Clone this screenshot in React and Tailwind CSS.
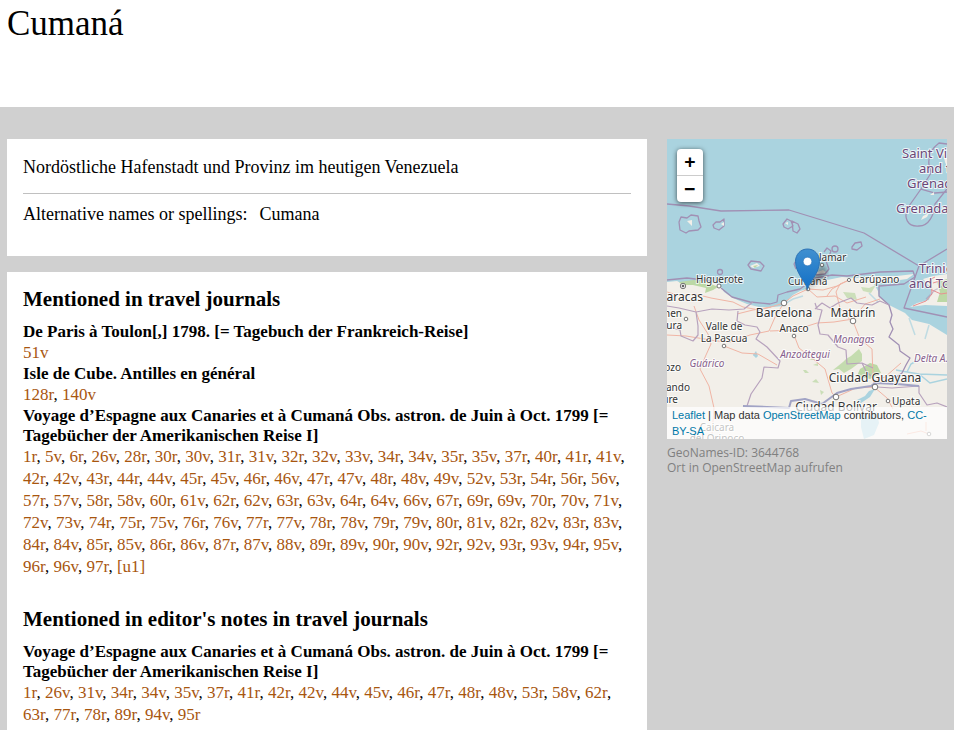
const journals = [
  { title: 'De Paris à Toulon[,] 1798. [= Tagebuch der Frankreich-Reise]', pages: ['51v'] },
  { title: 'Isle de Cube. Antilles en général', pages: ['128r', '140v'] },
  {
    title: 'Voyage d’Espagne aux Canaries et à Cumaná Obs. astron. de Juin à Oct. 1799 [= Tagebücher der Amerikanischen Reise I]',
    pages:
      '1r 5v 6r 26v 28r 30r 30v 31r 31v 32r 32v 33v 34r 34v 35r 35v 37r 40r 41r 41v 42r 42v 43r 44r 44v 45r 45v 46r 46v 47r 47v 48r 48v 49v 52v 53r 54r 56r 56v 57r 57v 58r 58v 60r 61v 62r 62v 63r 63v 64r 64v 66v 67r 69r 69v 70r 70v 71v 72v 73v 74r 75r 75v 76r 76v 77r 77v 78r 78v 79r 79v 80r 81v 82r 82v 83r 83v 84r 84v 85r 85v 86r 86v 87r 87v 88v 89r 89v 90r 90v 92r 92v 93r 93v 94r 95v 96r 96v 97r [u1]'.split(' '),
  },
];

const notes = [
  {
    title: 'Voyage d’Espagne aux Canaries et à Cumaná Obs. astron. de Juin à Oct. 1799 [= Tagebücher der Amerikanischen Reise I]',
    pages: '1r 26v 31v 34r 34v 35v 37r 41r 42r 42v 44v 45v 46r 47r 48r 48v 53r 58v 62r 63r 77r 78r 89r 94v 95r'.split(' '),
  },
];

function Section({ title, entries }) {
  return (
    <section className="pb-[29px]">
      <h2 className="text-[21px] leading-6 font-bold">{title}</h2>
      <div className="pt-[11px]">
        {entries.map((entry) => (
          <div key={entry.title}>
            <h3 className="text-[17px] leading-5 font-bold">{entry.title}</h3>
            <p className="text-[17px] leading-[22px]">
              {entry.pages.map((page, i) => (
                <span key={page}>
                  {i > 0 && ', '}
                  <a href="#" className="text-[#a8560f]">{page}</a>
                </span>
              ))}
            </p>
          </div>
        ))}
      </div>
    </section>
  );
}

function Place({ x, y, size = 11, anchor = 'start', children }) {
  return (
    <text x={x} y={y} fontSize={size} textAnchor={anchor} fill="#333" stroke="#fff" strokeOpacity="0.75" strokeWidth="2" paintOrder="stroke">
      {children}
    </text>
  );
}

function Region({ x, y, size = 11, anchor = 'start', italic = false, children }) {
  return (
    <text x={x} y={y} fontSize={size} textAnchor={anchor} fontStyle={italic ? 'italic' : 'normal'} fill={italic ? '#87618c' : '#6b4877'} stroke="#fff" strokeOpacity="0.8" strokeWidth="2" paintOrder="stroke">
      {children}
    </text>
  );
}

const towns = [[52, 147, 2], [182, 141, 1.6], [155, 126, 1.8], [141, 150, 1.8], [19, 180, 1.8], [57, 207, 1.8], [127, 197, 1.8], [117, 164, 2.8], [186, 182, 2.8], [208, 248, 2.8], [169, 258, 2.8], [221, 262, 1.8], [262, 295, 1.8]];

function MapDrawing() {
  return (
    <svg viewBox="0 0 280 300" preserveAspectRatio="xMidYMid slice" className="block h-full w-full font-['Noto_Sans',sans-serif]" role="img" aria-label="Map of Cumaná">
      <defs>
        <linearGradient id="pin" x1="0" y1="0" x2="0" y2="1">
          <stop offset="0" stopColor="#4090d0" />
          <stop offset="1" stopColor="#126fc6" />
        </linearGradient>
        <filter id="soft"><feGaussianBlur stdDeviation="2" /></filter>
      </defs>
      <rect width="280" height="300" fill="#aad3df" />
      <g fill="#f2efe9">
        <path d="M0 143L10 142L16 145L30 142L42 143L53 146L57 153L66 159L80 165L92 168L106 168L116 167L122 160L126 156L133 152L140 150L145 145L149 140L160 141L175 138L190 139L213 137L230 137L247 135L240 140L225 142L207 145L211 152L212 158L222 166L230 170L238 174L245 181L262 185L280 196V300H0Z" />
        <path d="M256 140L266 137L280 135V167L258 166L243 168L250 164L262 161L265 150Z" />
        <path d="M148 134L156 131L160 134L152 136Z" />
        <path d="M83 127L90 124L93 127L86 129Z" />
      </g>
      <g fill="#bcd8a5">
        <path d="M12 143L27 141L42 144L51 148L46 151L38 154L39 149L26 146L15 146Z" />
        <path d="M192 210L184 217L179 220L176 223L166 231L172 230L177 234L184 230L195 222L195 215Z" opacity=".85" />
        <path d="M193 230L203 224L210 226L214 234L203 240L190 237Z" />
        <path d="M176 153L188 154L190 161L180 159ZM194 148L202 149L209 146L204 154L196 152Z" opacity=".7" />
        <path d="M270 143L280 140V163L270 163L273 153Z" />
        <path d="M86 127L91 126L88 129Z" />
        <path d="M136 231h3l3 3h-4zm10-5l5-2v3zm-1 17l4-3 3 4zm8 8l4 2-3 3zm-11-30l5-2 2 2z" opacity=".75" />
      </g>
      <g fill="none" stroke="#aad3df" strokeWidth="1.500">
        <path d="M229 231L240 233L252 235L280 236M240 233L244 225L251 221M252 235L263 244L280 240" />
        <path d="M114 167L126 160L136 157M202 154L211 163M86 216L90 215M242 179L248 196M262 186L258 200" opacity=".7" />
      </g>
      <g fill="#aad3df">
        <path d="M208 250L202 252L198 257L190 261L194 264L203 258Z" />
        <path d="M86 216l3-4 2 5-2 2zM194 272L201 278L210 273L212 284L207 296L197 300L194 288Z" />
      </g>
      <g fill="none" stroke="#f0b5a5" strokeWidth="1">
        <path d="M0 153L14 157L28 155L44 159L66 163L76 168L92 171L104 168L117 164L126 157L141 150L156 151L170 147L182 141" />
        <path d="M117 164l-8 12-7 16-19 4-20 7-13-1-31-5-19-1" />
        <path d="M27 167l5 14 9 14 3 10-5 11-6 14 9 17 5 22-2 26" />
        <path d="M103 192l25-1 22-7 17-1 19-3 12-15 15-5" />
        <path d="M127 196l5 13 14 11 12 10 7 24 4 4 20-9 18-1 13 11 6 11" />
        <path d="M186 182l7 18 12 10 1 28 2 10" />
        <path d="M57 207l18 7 16 1 19 11M206 243l12-5 16-14" />
        <path d="M182 141L173 145L169 153L173 169L184 182M141 150L150 158L168 157L180 164L199 158M174 145L165 150L160 157" />
        <path d="M70 175L86 171L104 168M240 295L254 292L262 295M259 292L259 283" />
      </g>
      <g fill="none" stroke="#e98f91" strokeWidth="1">
        <path d="M246 167L259 162L265 155L264 140L268 138M265 151L274 155L280 154M266 144L276 141" />
      </g>
      <g fill="none" stroke="#a190b4" strokeWidth="1.300" strokeLinejoin="round">
        <path d="M0 65L22 67L54 72L122 71L197 94L252 127L237 169L280 178M252 127L280 110" />
        <path d="M12 83L14 78L20 79L24 76L31 77L32 82L34 88L31 91L22 92L19 94L13 91Z" />
        <path d="M46 86L49 83L53 83L57 80L57 87L52 91L47 89ZM116 85L120 80L124 82L126 87L121 90L117 88ZM125 82L131 85L133 90L130 94L126 92Z" />
        <path d="M81 126L84 122L93 123L97 127L94 132L84 130ZM185 108L188 104L194 103L195 107L190 111L185 110Z" />
        <circle cx="168" cy="110" r="3" /><circle cx="53" cy="133" r="2.5" />
        <path d="M157 113L160 109L164 112L162 117M129 130L127 125L130 120M149 136L158 135L162 130L159 122" />
        <path d="M280 5L272 4C264 10 261 18 262 26L264 34L254 50L242 67C235 79 241 88 252 87C262 87 267 76 268 65L280 50M254 50L268 54L280 53" />
        <path d="M0 141L20 139L45 142M54 149L65 158L83 163L103 165L110 163L111 156L120 153L133 150L140 145M144 140L165 136L180 137L213 133L246 132L248 138L237 145L212 147L212 157L222 166L225 176L223 183L226 190L222 198L232 206L233 212L243 219L239 226L235 234L228 239" />
        <path d="M280 145L268 151L259 160" opacity=".5" />
      </g>
      <g fill="none" stroke="#b7a2bd" strokeWidth="1.200" strokeLinejoin="round">
        <path d="M0 167L12 169L29 173L31 187L31 196L26 202L14 197L13 191L5 189M29 173L45 170L62 171L77 170L86 163" />
        <path d="M71 172L70 182L78 186L90 188L93 193L89 200L100 208L113 222L111 229L97 228L95 239L84 255L80 267" />
        <path d="M148 164l2 6 5 1-4 15 2 9 8 1 10 12 8 3 1 14 15-1 11 5m-11-5l4 8 5 5" />
        <path d="M148 170L155 164L163 169L171 164L184 159L190 164L205 166L213 162L222 166" />
        <path d="M210 248L225 249L252 247L252 254L260 266L270 264L280 268" />
      </g>
      <path d="M76 267L100 268L122 269L124 262L138 260L155 265L170 254L184 250L204 247L208 244L230 245L252 247" fill="none" stroke="#a1a3c5" strokeWidth="2" strokeLinejoin="round" />
      <g fill="#f2efe9"><path d="M20 82l5-1 0 6M54 85l3-2v4zM118 84l3-1v3zM256 77l6-3-2 4-6 3zM263 56l4-3v3zM276 14l4-2v16l-2-5z" /></g>
      <Region x="235" y="19" size={13}>Saint Vincent</Region>
      <Region x="252" y="34" size={13}>and the</Region>
      <Region x="240" y="49" size={13}>Grenadines</Region>
      <Region x="229" y="74" size={13}>Grenada</Region>
      <Region x="252" y="134" size={13}>Trinidad</Region>
      <Region x="242" y="149" size={13}>and Tobago</Region>
      <Region x="40" y="228" anchor="middle" size={10} italic>Guárico</Region>
      <Region x="138" y="219" anchor="middle" size={10} italic>Anzoátegui</Region>
      <Region x="187" y="204" anchor="middle" size={10} italic>Monagas</Region>
      <Region x="247" y="223" size={10} italic>Delta A.</Region>
      <g fill="#fff" stroke="#555" strokeWidth="0.8">
        {towns.map(([cx, cy, r]) => <circle key={`${cx}-${cy}`} cx={cx} cy={cy} r={r} />)}
        <circle cx="16" cy="147" r="2.7" />
        <circle cx="16" cy="147" r="1" fill="#555" />
      </g>
      <Place x="29" y="144" size={10}>Higuerote</Place>
      <Place x="-8" y="162" size={12}>Caracas</Place>
      <Place x="152" y="122" size={10}>lamar</Place>
      <Place x="121" y="146" size={10}>Cumaná</Place>
      <Place x="186" y="144" size={10}>Carúpano</Place>
      <Place x="117" y="178" size={12} anchor="middle">Barcelona</Place>
      <Place x="186" y="178" size={12} anchor="middle">Maturín</Place>
      <Place x="127" y="193" size={10} anchor="middle">Anaco</Place>
      <Place x="57" y="191" size={10} anchor="middle">Valle de</Place>
      <Place x="57" y="203" size={10} anchor="middle">La Pascua</Place>
      <Place x="15" y="178" size={10} anchor="end">Carmen</Place>
      <Place x="15" y="190" size={10} anchor="end">de Cura</Place>
      <Place x="14" y="232" size={10} anchor="end">Calabozo</Place>
      <Place x="23" y="252" size={10} anchor="end">San Fernando</Place>
      <Place x="11" y="264" size={10} anchor="end">de Apure</Place>
      <Place x="208" y="243" size={12} anchor="middle">Ciudad Guayana</Place>
      <Place x="169" y="272" size={12} anchor="middle">Ciudad Bolívar</Place>
      <Place x="225" y="266" size={10}>Upata</Place>
      <Place x="50" y="292" size={10} anchor="middle">Caicara</Place>
      <Place x="50" y="303" size={10} anchor="middle">del Orinoco</Place>
      <path d="M141 149l8-17c4-7 11-6 11 0 0 4-4 7-8 10z" fill="#222" opacity=".4" filter="url(#soft)" />
      <path d="M140.500 150.500c-1-7-12-16-12-28 0-7 5-12.500 12-12.500s12 5.500 12 12.500c0 12-11 21-12 28z" fill="url(#pin)" stroke="#2c72b5" strokeWidth="1" />
      <circle cx="140.500" cy="122.500" r="4.300" fill="#fff" stroke="#2c72b5" strokeWidth="0.600" />
    </svg>
  );
}

export default function App() {
  return (
    <div className="min-h-screen bg-[#d0d0d0] font-['Liberation_Serif',serif] text-black">
      <header className="min-h-[107px] bg-white px-[7px] pt-1">
        <h1 className="text-[35px] leading-10">Cumaná</h1>
      </header>
      <div className="flex items-start gap-5 px-[7px] pt-8">
        <main className="flex min-w-0 flex-1 flex-col gap-4">
          <section className="bg-white px-4 pt-4 pb-[30px] text-[18px] leading-6">
            <p className="border-b border-[#c0c0c0] pb-[14px]">Nordöstliche Hafenstadt und Provinz im heutigen Venezuela</p>
            <dl className="flex gap-3 pt-2">
              <dt>Alternative names or spellings:</dt>
              <dd>Cumana</dd>
            </dl>
          </section>
          <div className="bg-white px-4 pt-[15px]">
            <Section title="Mentioned in travel journals" entries={journals} />
            <Section title="Mentioned in editor's notes in travel journals" entries={notes} />
          </div>
        </main>
        <aside className="w-[280px] shrink-0">
          <div className="relative h-[300px] overflow-hidden">
            <MapDrawing />
            <div className="absolute top-[10px] left-[10px] flex w-[26px] flex-col overflow-hidden rounded bg-white text-center font-['DejaVu_Sans_Mono',monospace] text-[18px] font-bold shadow-[0_1px_5px_rgba(0,0,0,0.65)]">
              <button type="button" aria-label="Zoom in" className="h-[27px] border-b border-[#ccc] leading-6">+</button>
              <button type="button" aria-label="Zoom out" className="h-[26px] leading-6">−</button>
            </div>
            <div className="absolute right-0 bottom-0 left-0 bg-white/70 px-[5px] font-['Liberation_Sans',Arial,sans-serif] text-[11px] leading-4 text-[#333]">
              <a href="#" className="text-[#0078a8]">Leaflet</a> | Map data <a href="#" className="text-[#0078a8]">OpenStreetMap</a> contributors, <a href="#" className="text-[#0078a8]">CC-BY-SA</a>
            </div>
          </div>
          <div className="pt-[6px] font-['Open_Sans',sans-serif] text-[12px] leading-[15px] text-[#808080]">
            <p>GeoNames-ID: 3644768</p>
            <a href="#">Ort in OpenStreetMap aufrufen</a>
          </div>
        </aside>
      </div>
    </div>
  );
}
